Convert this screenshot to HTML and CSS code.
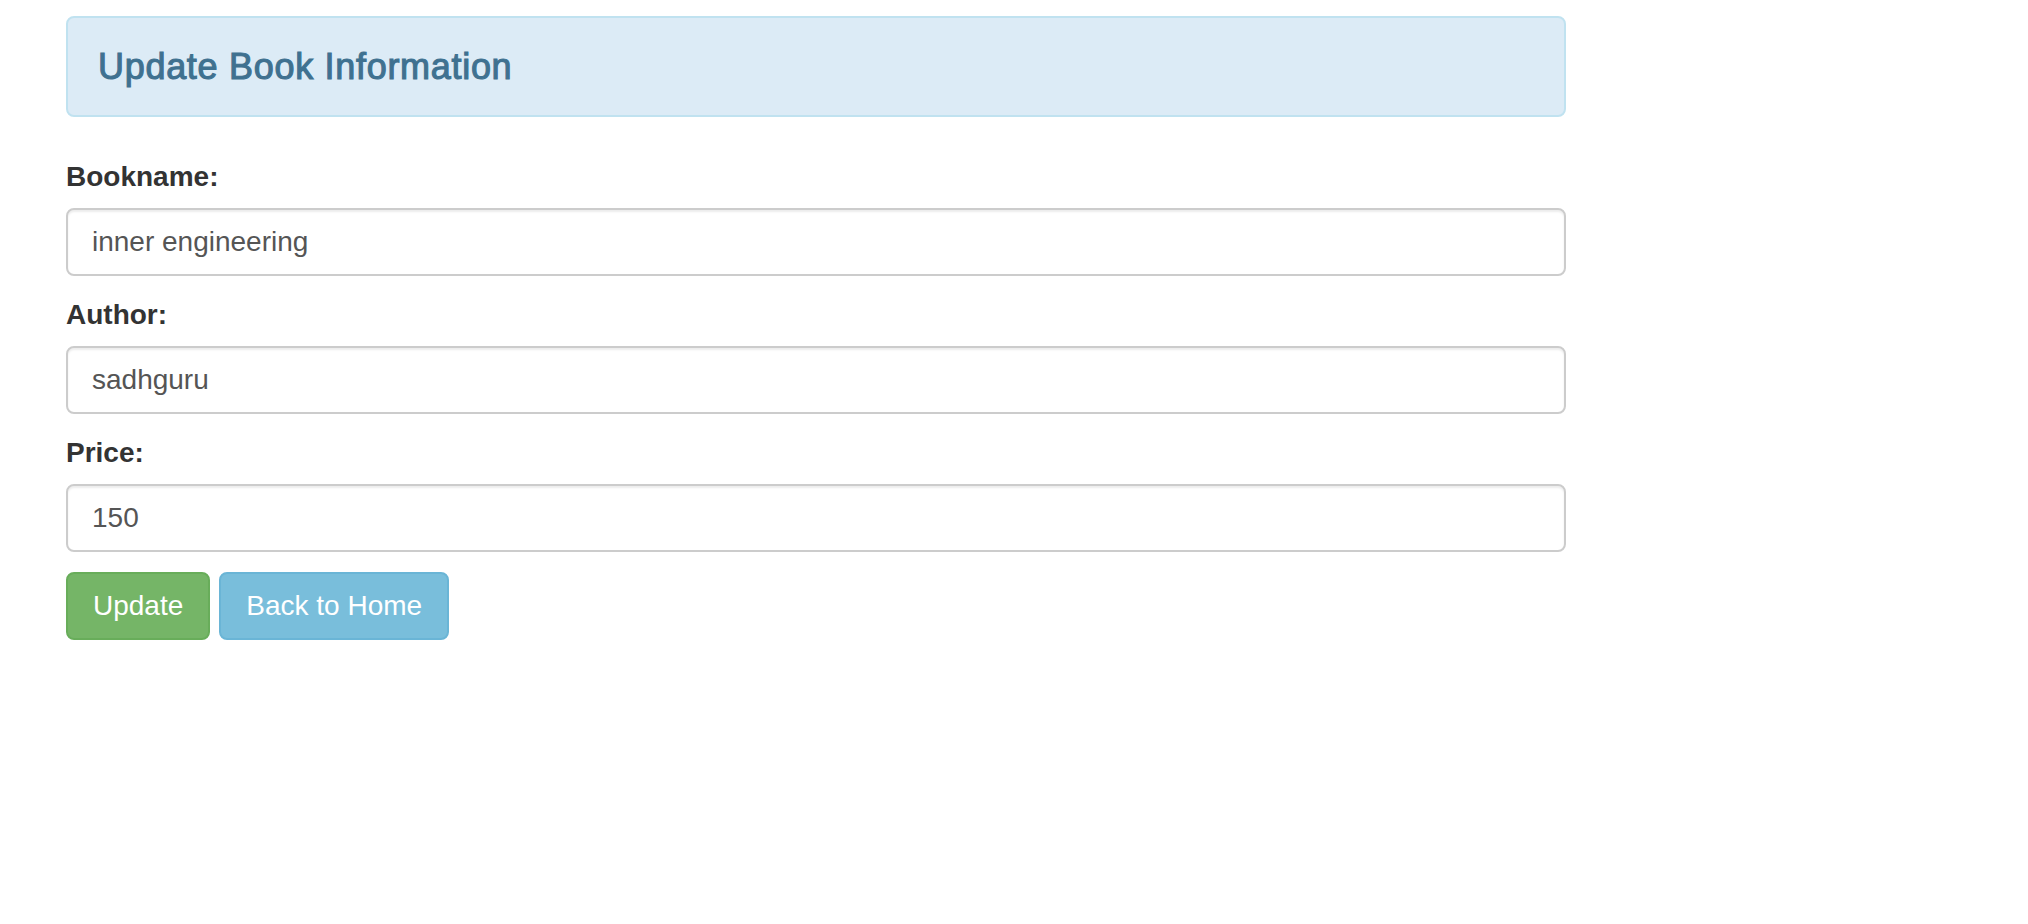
FILE: index.html
```html
<!DOCTYPE html>
<html lang="en">
<head>
<meta charset="utf-8">
<title>Update Book Information</title>
<link rel="stylesheet" href="styles.css">
</head>
<body>
<div class="container">
  <div class="alert">
    <h4 class="alert-title">Update Book Information</h4>
  </div>
  <form class="book-form">
    <div class="form-group">
      <label class="form-label" for="bookname">Bookname:</label>
      <input class="form-control" id="bookname" type="text" value="inner engineering">
    </div>
    <div class="form-group">
      <label class="form-label" for="author">Author:</label>
      <input class="form-control" id="author" type="text" value="sadhguru">
    </div>
    <div class="form-group">
      <label class="form-label" for="price">Price:</label>
      <input class="form-control" id="price" type="text" value="150">
    </div>
    <div class="actions">
      <button class="btn btn-success" type="button">Update</button>
      <button class="btn btn-info" type="button">Back to Home</button>
    </div>
  </form>
</div>
</body>
</html>
```

FILE: styles.css
```css
* {
  box-sizing: border-box;
}

html, body {
  margin: 0;
  padding: 0;
  background: #ffffff;
}

body {
  font-family: "Liberation Sans", Arial, sans-serif;
  font-size: 28px;
  color: #333333;
}

.container {
  width: 1500px;
  margin-left: 66px;
  padding-top: 16px;
}

.alert {
  background: #dcebf6;
  border: 2px solid #c0e2f0;
  border-radius: 8px;
  padding: 30px;
  margin-bottom: 40px;
}

.alert-title {
  margin: 0;
  font-size: 36px;
  font-weight: 400;
  line-height: 37px;
  letter-spacing: 0.7px;
  -webkit-text-stroke: 1.1px #3f7190;
  color: #3f7190;
}

.book-form {
  display: flex;
  flex-direction: column;
  gap: 19px;
}

.form-group {
  display: flex;
  flex-direction: column;
}

.form-label {
  display: block;
  font-weight: 700;
  font-size: 28px;
  line-height: 40px;
  margin-bottom: 11px;
  color: #333333;
}

.form-control {
  display: block;
  width: 100%;
  height: 68px;
  padding: 12px 24px;
  font-family: "Liberation Sans", Arial, sans-serif;
  font-size: 28px;
  line-height: 40px;
  color: #555555;
  background: #ffffff;
  border: 2px solid #cccccc;
  border-radius: 8px;
  box-shadow: inset 0 2px 2px rgba(0, 0, 0, 0.075);
  outline: none;
}

.actions {
  display: flex;
  gap: 9px;
  margin-top: 1px;
}

.btn {
  display: inline-block;
  height: 68px;
  padding: 12px 25px;
  font-family: "Liberation Sans", Arial, sans-serif;
  font-size: 28px;
  line-height: 40px;
  color: #ffffff;
  border: 2px solid transparent;
  border-radius: 8px;
  cursor: pointer;
}

.btn-success {
  background: #75b567;
  border-color: #68ad5a;
}

.btn-info {
  background: #79bedb;
  border-color: #6ab5d6;
}
```
